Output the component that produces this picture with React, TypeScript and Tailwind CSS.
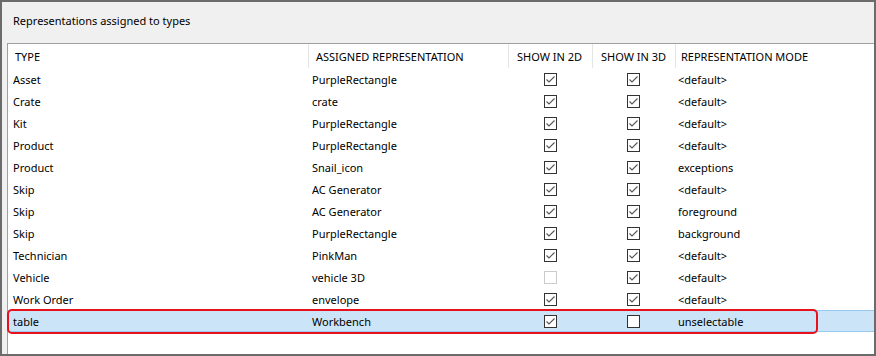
import React from "react";

type Row = {
  type: string;
  rep: string;
  in2d: "on" | "off" | "disabled";
  in3d: "on" | "off" | "disabled";
  mode: string;
  selected?: boolean;
};

const rows: Row[] = [
  { type: "Asset", rep: "PurpleRectangle", in2d: "on", in3d: "on", mode: "<default>" },
  { type: "Crate", rep: "crate", in2d: "on", in3d: "on", mode: "<default>" },
  { type: "Kit", rep: "PurpleRectangle", in2d: "on", in3d: "on", mode: "<default>" },
  { type: "Product", rep: "PurpleRectangle", in2d: "on", in3d: "on", mode: "<default>" },
  { type: "Product", rep: "Snail_icon", in2d: "on", in3d: "on", mode: "exceptions" },
  { type: "Skip", rep: "AC Generator", in2d: "on", in3d: "on", mode: "<default>" },
  { type: "Skip", rep: "AC Generator", in2d: "on", in3d: "on", mode: "foreground" },
  { type: "Skip", rep: "PurpleRectangle", in2d: "on", in3d: "on", mode: "background" },
  { type: "Technician", rep: "PinkMan", in2d: "on", in3d: "on", mode: "<default>" },
  { type: "Vehicle", rep: "vehicle 3D", in2d: "disabled", in3d: "on", mode: "<default>" },
  { type: "Work Order", rep: "envelope", in2d: "on", in3d: "on", mode: "<default>" },
  { type: "table", rep: "Workbench", in2d: "on", in3d: "off", mode: "unselectable", selected: true },
];

const cols = "grid grid-cols-[300px_200px_84px_83px_1fr]";

function Check({ state }: { state: "on" | "off" | "disabled" }) {
  const border = state === "disabled" ? "border-[#cccccc]" : "border-[#333333]";
  return (
    <div className={`w-[13px] h-[13px] border ${border} bg-white flex items-center justify-center`}>
      {state === "on" && (
        <svg width="11" height="11" viewBox="0 0 11 11">
          <path d="M1.5 5.5 L4 8 L9.5 2.5" fill="none" stroke="#555555" strokeWidth="1.1" />
        </svg>
      )}
    </div>
  );
}

export default function App() {
  return (
    <div
      className="w-[876px] h-[356px] border-2 border-[#6b6b6b] bg-[#f0f0f0] flex flex-col text-[11px] text-black"
      style={{ fontFamily: '"Noto Sans", "Open Sans", sans-serif' }}
    >
      <div className="h-[41px] pl-[11px] pt-[11px] leading-[16px]">Representations assigned to types</div>
      <div className="flex-1 ml-[5px] border-l border-t border-[#a0a0a0] bg-white">
        <div className={`${cols} h-[24px] leading-[16px]`}>
          <div className="pl-[7px] pt-[1px] flex items-center">TYPE</div>
          <div className="pl-[7px] pt-[1px] flex items-center border-l border-[#e5e5e5]">ASSIGNED REPRESENTATION</div>
          <div className="pl-[8px] pt-[1px] flex items-center border-l border-[#e5e5e5]">SHOW IN 2D</div>
          <div className="pl-[8px] pt-[1px] flex items-center border-l border-[#e5e5e5]">SHOW IN 3D</div>
          <div className="pl-[5px] pt-[1px] flex items-center border-l border-[#e5e5e5]">REPRESENTATION MODE</div>
        </div>
        {rows.map((r, i) => (
          <div
            key={i}
            className={`${cols} h-[22px] leading-[16px] relative ${
              r.selected ? "bg-[#cce4f7] border-y border-[#99c9ef]" : ""
            }`}
          >
            <div className="pl-[5px] pt-[1px] flex items-center">{r.type}</div>
            <div className="pl-[4px] pt-[1px] flex items-center">{r.rep}</div>
            <div className="flex items-center justify-center">
              <Check state={r.in2d} />
            </div>
            <div className="flex items-center justify-center">
              <Check state={r.in3d} />
            </div>
            <div className="pl-[3px] pt-[1px] flex items-center">{r.mode}</div>
            {r.selected && (
              <div className="absolute left-[-1px] top-[-2px] w-[811px] h-[25px] border-2 border-[#e8101a] rounded-[5px]" />
            )}
          </div>
        ))}
      </div>
    </div>
  );
}
